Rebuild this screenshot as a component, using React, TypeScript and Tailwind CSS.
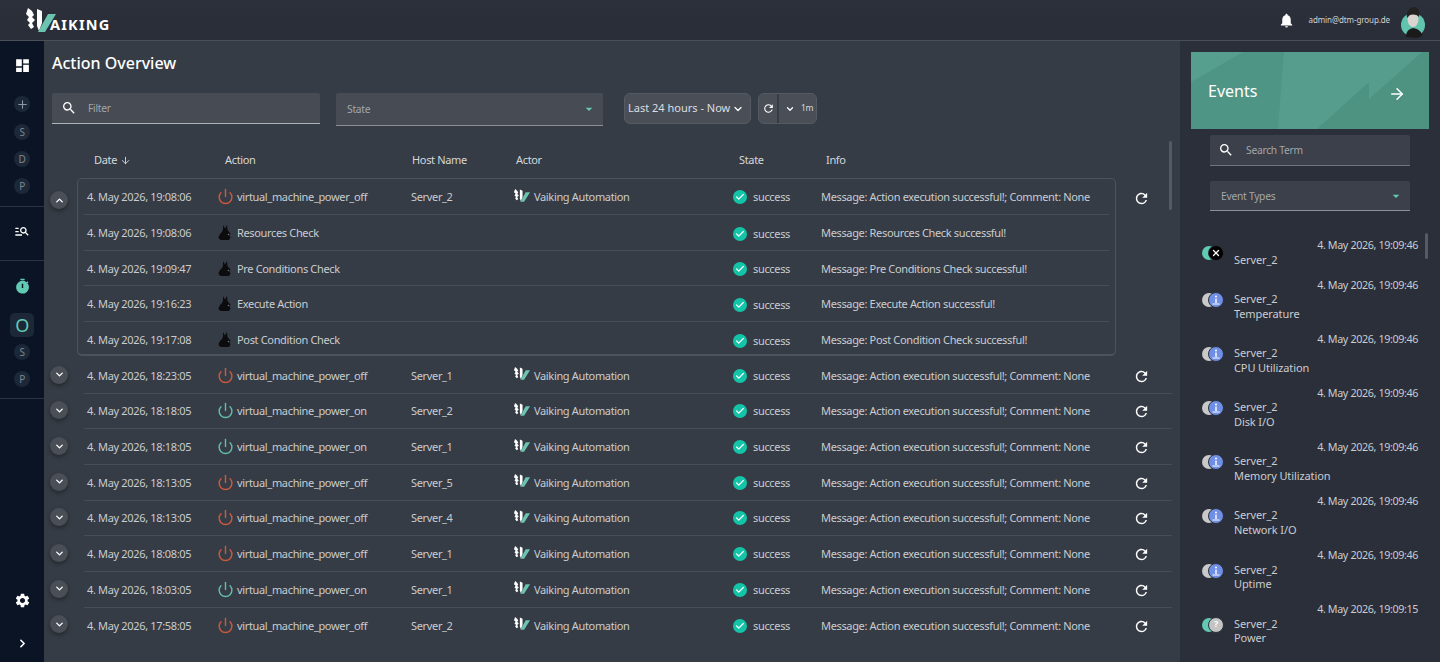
import { Power, ArrowRight, ArrowDown, ChevronDown, ChevronUp, ChevronRight, Plus, Check, X } from 'lucide-react';
import { MdDashboard, MdManageSearch, MdTimer, MdSettings, MdSearch, MdNotifications, MdRefresh, MdArrowDropDown } from 'react-icons/md';

const subRows = [
  { date: '4. May 2026, 19:08:06', name: 'Resources Check' },
  { date: '4. May 2026, 19:09:47', name: 'Pre Conditions Check' },
  { date: '4. May 2026, 19:16:23', name: 'Execute Action' },
  { date: '4. May 2026, 19:17:08', name: 'Post Condition Check' },
];

const rows = [
  { date: '4. May 2026, 18:23:05', on: false, host: 'Server_1' },
  { date: '4. May 2026, 18:18:05', on: true, host: 'Server_2' },
  { date: '4. May 2026, 18:18:05', on: true, host: 'Server_1' },
  { date: '4. May 2026, 18:13:05', on: false, host: 'Server_5' },
  { date: '4. May 2026, 18:13:05', on: false, host: 'Server_4' },
  { date: '4. May 2026, 18:08:05', on: false, host: 'Server_1' },
  { date: '4. May 2026, 18:03:05', on: true, host: 'Server_1' },
  { date: '4. May 2026, 17:58:05', on: false, host: 'Server_2' },
];

const events = [
  { time: '19:09:46', lines: ['Server_2'], kind: 'error' },
  { time: '19:09:46', lines: ['Server_2', 'Temperature'], kind: 'info' },
  { time: '19:09:46', lines: ['Server_2', 'CPU Utilization'], kind: 'info' },
  { time: '19:09:46', lines: ['Server_2', 'Disk I/O'], kind: 'info' },
  { time: '19:09:46', lines: ['Server_2', 'Memory Utilization'], kind: 'info' },
  { time: '19:09:46', lines: ['Server_2', 'Network I/O'], kind: 'info' },
  { time: '19:09:46', lines: ['Server_2', 'Uptime'], kind: 'info' },
  { time: '19:09:15', lines: ['Server_2', 'Power'], kind: 'unknown' },
];

function Letter({ children }: { children: string }) {
  return (
    <div className="w-4 h-4 rounded-full bg-[#1c2737] text-[#7d8794] text-[10px] flex items-center justify-center">
      {children}
    </div>
  );
}

function Mark({ className }: { className?: string }) {
  return (
    <svg viewBox="0 0 30 26" className={className}>
      <path d="M2 0l4 3 2 4-2 2 3 3-3 3 2 4-3 2-3-4 2-2-3-3 2-3-3-3z" fill="#fff" />
      <path d="M11 1l5 2v12l-3 8-2-5z" fill="#fff" />
      <path d="M22 6h8L19 24h-7z" fill="#6cc4b0" />
    </svg>
  );
}

function Rabbit() {
  return (
    <svg viewBox="0 0 14 16" className="w-[14px] h-[16px] shrink-0">
      <path d="M5 0l2 3.500 2-3.500.5 5 2 2.500 1 1-1 2 1 2-1.500 2.500H3l-2-1 -.5-2 1.500-3 2-2 1-2.500z" fill="#0c0c0e" />
      <circle cx="10.500" cy="9.500" r="0.800" fill="#777" />
    </svg>
  );
}

function StateCell() {
  return (
    <div className="w-[88px] shrink-0 flex items-center gap-[6px]">
      <span className="w-[14px] h-[14px] rounded-full bg-[#13c4a8] flex items-center justify-center mt-px">
        <Check size={10} strokeWidth={3} className="text-white" />
      </span>
      <span className="pt-px">success</span>
    </div>
  );
}

function Actor() {
  return (
    <div className="w-[219px] shrink-0 flex items-center gap-1">
      <Mark className="w-4 h-[14px] -mt-[2px]" />
      <span className="pt-px">Vaiking Automation</span>
    </div>
  );
}

function ActionName({ on, label }: { on: boolean; label: string }) {
  return (
    <div className="w-[193px] shrink-0 flex items-center gap-[3px]">
      <Power size={17} strokeWidth={2} className={`-ml-px ${on ? 'text-[#62bdaa]' : 'text-[#cb5a3f]'}`} />
      <span className="pt-px">{label}</span>
    </div>
  );
}

function Toggle({ up }: { up?: boolean }) {
  return (
    <div className="w-[18px] h-[18px] rounded-full bg-[#4a4e57] shadow-[0_2px_4px_rgba(0,0,0,0.35)] flex items-center justify-center text-white">
      {up ? <ChevronUp size={11} strokeWidth={3} /> : <ChevronDown size={11} strokeWidth={3} />}
    </div>
  );
}

function EventIcon({ kind }: { kind: string }) {
  const back = kind === 'info' ? 'bg-[#c9c9c9]' : 'bg-[#62c9b2]';
  return (
    <div className="w-[22px] h-[15px] flex shrink-0">
      <div className={`w-[14px] h-[14px] rounded-full ${back}`} />
      <div
        className={`w-[16px] h-[16px] -ml-[8px] -mt-px rounded-full border border-[#2b2f3a] flex items-center justify-center text-white text-[9px] font-bold ${
          kind === 'error' ? 'bg-black' : kind === 'info' ? 'bg-[#6f8fe6]' : 'bg-[#c4c4c4]'
        }`}
      >
        {kind === 'error' && <X size={10} strokeWidth={3} />}
        {kind === 'unknown' && '?'}
        {kind === 'info' && (
          <svg viewBox="0 0 14 14" className="w-[14px] h-[14px]">
            <circle cx="7" cy="3.500" r="1" fill="#fff" />
            <path d="M6.300 5.500h1.400v4.500H6.300z M3.500 10.500h7v1h-7z" fill="#fff" />
          </svg>
        )}
      </div>
    </div>
  );
}

export default function App() {
  return (
    <div className="w-[1440px] h-[662px] overflow-hidden flex flex-col bg-[#363c45] text-[#c9ccd1] text-[11px] tracking-[-0.34px] font-['Noto_Sans',sans-serif]">
      <header className="h-[41px] shrink-0 bg-gradient-to-b from-[#2c303a] to-[#292d37] border-b border-[#4a4f58] flex items-center">
        <div className="ml-[26px] flex items-end h-[26px] mt-[2px]">
          <Mark className="w-[30px] h-[26px]" />
          <span className="-ml-[6px] text-white font-bold text-[14.5px] leading-[20px] tracking-[1.2px]">AIKING</span>
        </div>
        <div className="ml-auto flex items-center">
          <MdNotifications size={17} className="text-white" />
          <span className="ml-[14px] text-[8px] tracking-[-0.1px] text-[#cfd2d6]">admin@dtm-group.de</span>
          <svg viewBox="0 0 28 33" className="w-[28px] h-[33px] ml-[9px] mr-[13px] mt-[2px]">
            <path d="M2 20a12 12 0 0 1 24 0c0 6-4 11-12 11S2 26 2 20z" fill="#62c4ae" />
            <path d="M7 32c0-6 3-8 7-9 6 1 9 4 9 8l-5 2z" fill="#1a1a1a" />
            <ellipse cx="14" cy="14" rx="5.500" ry="8" fill="#d9d4cf" />
            <path d="M8 13c-1-7 3-11 8-11 4 1 5 5 4 10-2-3-7-3-9-2z" fill="#222" />
          </svg>
        </div>
      </header>

      <div className="flex-1 flex min-h-0">
        <nav className="w-[44px] shrink-0 bg-[#0a1425] flex flex-col items-center text-white">
          <MdDashboard size={17} className="mt-[16px]" />
          <div className="mt-[22px] w-4 h-4 rounded-full bg-[#1c2737] text-[#8e97a3] flex items-center justify-center">
            <Plus size={13} />
          </div>
          <div className="mt-[12px] flex flex-col gap-[11px]">
            <Letter>S</Letter>
            <Letter>D</Letter>
            <Letter>P</Letter>
          </div>
          <div className="w-full h-px bg-[#2a3443] mt-[12px]" />
          <MdManageSearch size={16} className="mt-[16px]" />
          <div className="w-full h-px bg-[#2a3443] mt-[21px]" />
          <MdTimer size={17} className="mt-[17px] text-[#62c9b2]" />
          <div className="mt-[18px] w-6 h-6 rounded-[5px] bg-[#1c2838] text-[#62c9b2] text-[18px] flex items-center justify-center">
            O
          </div>
          <div className="mt-[7px] flex flex-col gap-[11px]">
            <Letter>S</Letter>
            <Letter>P</Letter>
          </div>
          <div className="w-full h-px bg-[#2a3443] mt-[11px]" />
          <MdSettings size={17} className="mt-auto" />
          <ChevronRight size={13} strokeWidth={3} className="mt-[28px] mb-[12px]" />
        </nav>

        <main className="flex-1 pl-[6px] min-w-0">
          <h1 className="ml-[2px] mt-[10px] h-[24px] text-[16px] tracking-normal leading-[24px] font-medium text-white">
            Action Overview
          </h1>
          <div className="mt-[18px] ml-[2px] flex items-start h-[33px] text-[10.25px] tracking-[-0.25px]">
            <div className="w-[268px] h-[31px] rounded-t-[2px] bg-[#474b53] border-b border-[#b0b3b8] flex items-center pl-[9px] gap-[11px] text-[#a3a6ab]">
              <MdSearch size={16} className="text-white" />
              <span className="pt-[2px]">Filter</span>
            </div>
            <div className="ml-[16px] w-[267px] h-[33px] rounded-t-[2px] bg-[#474b53] border-b border-[#8c9096] flex items-center pl-[11px] pr-[6px] justify-between text-[#a3a6ab]">
              <span className="pt-px">State</span>
              <MdArrowDropDown size={16} className="text-[#62c9b2]" />
            </div>
            <div className="ml-[21px] w-[127px] h-[31px] rounded-[6px] bg-[#4a4f57] border border-[#565b63] flex items-center pl-[3px] gap-[2px] text-[11px] tracking-normal whitespace-nowrap text-[#dcdee1]">
              <span>Last 24 hours - Now</span>
              <ChevronDown size={12} strokeWidth={2.5} className="text-white" />
            </div>
            <div className="ml-[7px] w-[59px] h-[31px] rounded-[6px] bg-[#4a4f57] border border-[#565b63] flex items-center text-white">
              <div className="w-[20px] h-full border-r-2 border-[#363c45] flex items-center justify-center">
                <MdRefresh size={13} />
              </div>
              <ChevronDown size={10} strokeWidth={3} className="ml-[6px]" />
              <span className="ml-[6px] text-[8.5px] text-[#d6d8dc]">1m</span>
            </div>
          </div>

          <div className="mt-[16px] h-[36px] flex items-center text-[#d5d7da]">
            <div className="ml-[44px] w-[131px] flex items-center gap-[3px]">
              Date <ArrowDown size={11} />
            </div>
            <div className="w-[187px]">Action</div>
            <div className="w-[104px]">Host Name</div>
            <div className="w-[223px]">Actor</div>
            <div className="w-[87px]">State</div>
            <div>Info</div>
          </div>

          <div className="relative">
            <div className="flex items-start">
              <div className="w-[27px] pt-[13px]">
                <Toggle up />
              </div>
              <div className="w-[1039px] h-[178px] rounded-[5px] border border-[#4d525b] border-b-2">
                <div className="ml-[6px] mr-[6px] h-[36px] flex items-center border-b border-[#484d56]">
                  <div className="w-[134px] shrink-0 pl-[3px] pt-px">4. May 2026, 19:08:06</div>
                  <ActionName on={false} label="virtual_machine_power_off" />
                  <div className="w-[103px] shrink-0 pt-px">Server_2</div>
                  <Actor />
                  <StateCell />
                  <div className="whitespace-nowrap pt-px">Message: Action execution successful!; Comment: None</div>
                </div>
                {subRows.map((r, i) => (
                  <div
                    key={r.date}
                    className={`ml-[6px] mr-[6px] h-[35.5px] pt-[2px] flex items-center ${i < 3 ? 'border-b border-[#484d56]' : ''}`}
                  >
                    <div className="w-[134px] shrink-0 pl-[3px]">{r.date}</div>
                    <div className="w-[193px] shrink-0 flex items-center gap-[5px]">
                      <Rabbit />
                      <span>{r.name}</span>
                    </div>
                    <div className="w-[103px] shrink-0" />
                    <div className="w-[219px] shrink-0" />
                    <StateCell />
                    <div>Message: {r.name} successful!</div>
                  </div>
                ))}
              </div>
              <MdRefresh size={17} className="ml-[17px] mt-[12px] text-white" />
            </div>

            <div className="mt-[2px]">
              {rows.map((r, i) => (
                <div key={r.date + r.host} className="flex items-center h-[35.66px]">
                  <div className="w-[34px] -mt-[2px]">
                    <Toggle />
                  </div>
                  <div className={`w-[1088px] h-full flex items-center ${i < rows.length - 1 ? 'border-b border-[#484d56]' : ''}`}>
                    <div className="w-[134px] shrink-0 pl-[3px] pt-px">{r.date}</div>
                    <ActionName on={r.on} label={r.on ? 'virtual_machine_power_on' : 'virtual_machine_power_off'} />
                    <div className="w-[103px] shrink-0 pt-px">{r.host}</div>
                    <Actor />
                    <StateCell />
                    <div className="w-[312px] shrink-0 whitespace-nowrap pt-px">Message: Action execution successful!; Comment: None</div>
                    <MdRefresh size={17} className="text-white mt-[2px]" />
                  </div>
                </div>
              ))}
            </div>

            <div className="absolute right-[8px] -top-[37px] w-[3px] h-[69px] rounded-full bg-[#565b63]" />
          </div>
        </main>

        <aside className="relative w-[260px] shrink-0 bg-[#2b2f3a]">
          <div className="relative ml-[11px] mt-[11px] w-[238px] h-[77px] bg-[#579d8e] overflow-hidden text-white">
            <svg viewBox="0 0 238 77" className="absolute inset-0 w-full h-full">
              <path d="M0 0h93l-6 77H0z" fill="#4f9585" />
              <path d="M0 0h52L0 30z" fill="#569f8f" />
              <path d="M126 77l52-47v17l53-47h7v77z" fill="#4e9282" />
            </svg>
            <span className="absolute left-[17px] top-[27px] text-[16px] tracking-normal leading-[24px]">Events</span>
            <ArrowRight size={18} className="absolute right-[23px] top-[33px]" />
          </div>
          <div className="ml-[30px] mt-[6px] w-[200px] h-[31px] rounded-t-[2px] bg-[#3c404a] border-b border-[#70747c] flex items-center pl-[8px] gap-[12px] text-[10.25px] tracking-[-0.25px] text-[#a3a6ab]">
            <MdSearch size={16} className="text-white" />
            <span className="pt-[2px]">Search Term</span>
          </div>
          <div className="ml-[30px] mt-[15px] w-[200px] h-[30px] rounded-t-[2px] bg-[#3c404a] border-b border-[#8c9096] flex items-center pl-[11px] pr-[6px] justify-between text-[10.25px] tracking-[-0.25px] text-[#a3a6ab]">
            <span className="pt-[2px]">Event Types</span>
            <MdArrowDropDown size={16} className="text-[#62c9b2]" />
          </div>
          <div className="ml-[22px] mr-[22px] mt-[27px]">
            {events.map((e, i) => (
              <div key={i} className="mb-[10.6px] leading-[14.5px]">
                <div className="text-right text-[10.75px] tracking-[-0.38px]">4. May 2026, {e.time}</div>
                <div className="flex items-start">
                  <div className={e.lines.length > 1 ? 'pt-[1px]' : '-mt-[7px]'}>
                    <EventIcon kind={e.kind} />
                  </div>
                  <div className="ml-[10px] text-[11px] tracking-[-0.1px]">
                    {e.lines.map((l) => (
                      <div key={l}>{l}</div>
                    ))}
                  </div>
                </div>
              </div>
            ))}
          </div>
          <div className="absolute right-[12px] top-[192px] w-[3px] h-[26px] rounded-full bg-[#565b63]" />
        </aside>
      </div>
    </div>
  );
}
